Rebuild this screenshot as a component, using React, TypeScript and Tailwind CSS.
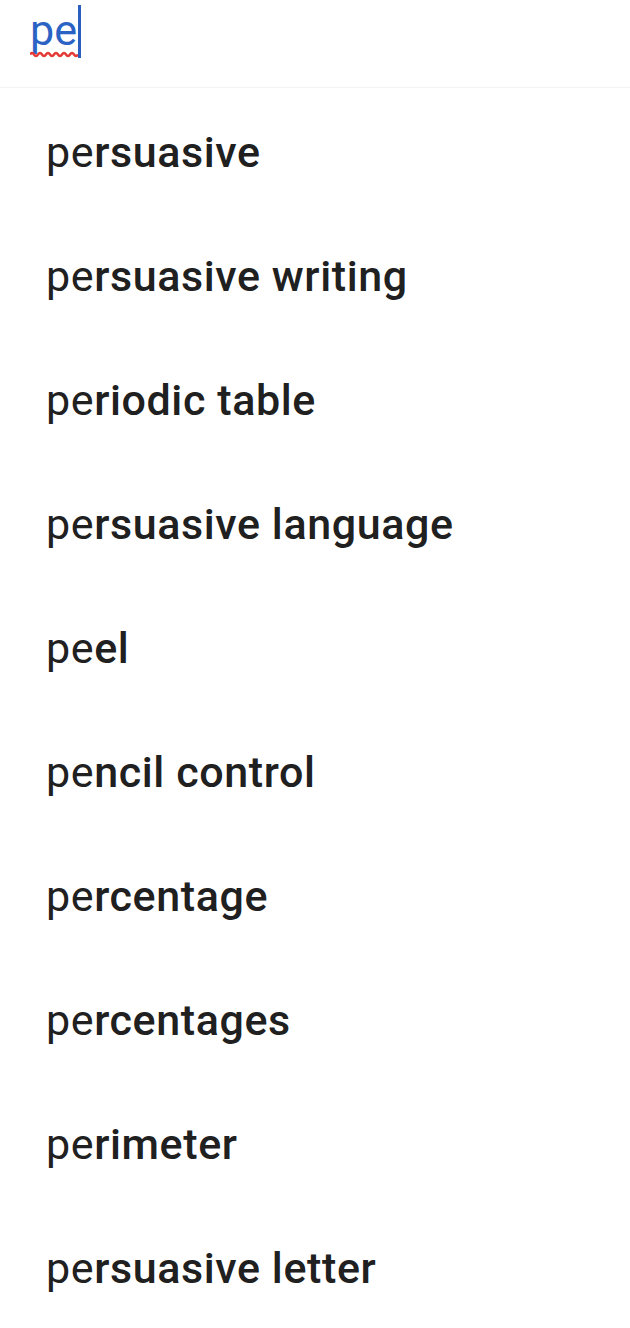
import React from "react";

const items: [string, string][] = [
  ["pe", "rsuasive"],
  ["pe", "rsuasive writing"],
  ["pe", "riodic table"],
  ["pe", "rsuasive language"],
  ["pe", "el"],
  ["pe", "ncil control"],
  ["pe", "rcentage"],
  ["pe", "rcentages"],
  ["pe", "rimeter"],
  ["pe", "rsuasive letter"],
];

export default function App() {
  return (
    <div className="w-[630px] h-[1328px] bg-white overflow-hidden" style={{ fontFamily: "Roboto, 'Noto Sans', Arial, sans-serif" }}>
      <div className="h-[88px] border-b border-[#f3f3f3] relative">
        <div className="absolute left-[30px] top-[5px] flex items-start">
          <span className="relative text-[43px] leading-[50px] text-[#2b63c4]">
            pe
            <svg className="absolute left-0 top-[46px]" width="48" height="7" viewBox="0 0 48 7">
              <path d="M0 3.5 Q2 0.5 4 3.5 T8 3.5 T12 3.5 T16 3.5 T20 3.5 T24 3.5 T28 3.5 T32 3.5 T36 3.5 T40 3.5 T44 3.5 T48 3.5" fill="none" stroke="#e53935" strokeWidth="2.5" />
            </svg>
          </span>
          <span className="w-[3px] h-[53px] bg-[#2b5fbf] ml-[1px]" />
        </div>
      </div>
      <div className="flex flex-col">
        {items.map(([a, b], i) => (
          <div key={i} className="h-[124px] flex items-center pl-[46px] pt-[5px] text-[43px] tracking-[0.6px] text-[#202020]">
            <span className="font-normal">{a}</span>
            <span className="font-medium">{b}</span>
          </div>
        ))}
      </div>
    </div>
  );
}
